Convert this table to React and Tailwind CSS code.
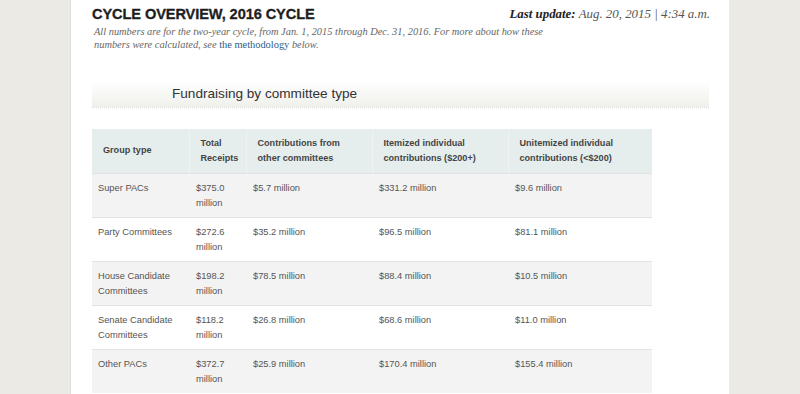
import React from 'react';

const rows = [
    { type: 'Super PACs', total: '$375.0 million', other: '$5.7 million', itemized: '$331.2 million', unitemized: '$9.6 million' },
    { type: 'Party Committees', total: '$272.6 million', other: '$35.2 million', itemized: '$96.5 million', unitemized: '$81.1 million' },
    { type: 'House Candidate Committees', total: '$198.2 million', other: '$78.5 million', itemized: '$88.4 million', unitemized: '$10.5 million' },
    { type: 'Senate Candidate Committees', total: '$118.2 million', other: '$26.8 million', itemized: '$68.6 million', unitemized: '$11.0 million' },
    { type: 'Other PACs', total: '$372.7 million', other: '$25.9 million', itemized: '$170.4 million', unitemized: '$155.4 million' },
];

const headers = [
    'Group type',
    'Total Receipts',
    'Contributions from other committees',
    'Itemized individual contributions ($200+)',
    'Unitemized individual contributions (<$200)',
];

const widths = ['w-[97px]', 'w-[57px]', 'w-[126px]', 'w-[136px]', 'w-[144px]'];

const App = () => {
    return (
        <div className="min-h-[394px] w-full bg-[#ebeae4] font-['Liberation_Sans',Arial,sans-serif]">
            <div className="ml-[70px] w-[659px] min-h-[394px] bg-white border-l border-[#e0dfd8] pl-[21px] pr-[20px] pt-[5px]">

                {/* title row */}
                <div className="flex justify-between items-start">
                    <h1 className="text-[14.6px] leading-[18px] font-bold text-[#1e1e1e] tracking-[-0.1px] [-webkit-text-stroke:0.3px_#1e1e1e]">
                        CYCLE OVERVIEW, 2016 CYCLE
                    </h1>
                    <p className="font-['Liberation_Serif',serif] italic text-[12.9px] leading-[18px] text-[#555] -mr-[1px]">
                        <b className="text-[#222]">Last update:</b> Aug. 20, 2015 | 4:34 a.m.
                    </p>
                </div>
                <p className="mt-[2px] ml-[2px] w-[470px] font-['Liberation_Serif',serif] italic text-[10.4px] leading-[13px] text-[#666]">
                    All numbers are for the two-year cycle, from Jan. 1, 2015 through Dec. 31, 2016. For more about how these numbers were calculated, see{' '}
                    <a className="not-italic text-[#2b5b87]">the methodology</a> below.
                </p>

                {/* section band */}
                <div className="mt-[29px] h-[28px] bg-gradient-to-b from-white to-[#f0f0eb] border-b border-dotted border-[#d8d8d8] pl-[80px] flex items-center">
                    <h2 className="text-[13.6px] text-[#333] pt-[1px]">Fundraising by committee type</h2>
                </div>

                {/* table */}
                <table className="mt-[21px] table-fixed border-collapse w-[560px]">
                    <colgroup>
                        {widths.map((w, i) => <col key={i} className={w} />)}
                    </colgroup>
                    <thead>
                        <tr className="bg-[#e5eeed] h-[44px]">
                            {headers.map((h, i) => (
                                <th
                                    key={i}
                                    className={`text-left align-middle font-bold text-[9.1px] leading-[15px] text-[#444] border-r border-[#edf3f2] last:border-r-0 ${i === 0 ? 'pl-[11px]' : 'pl-[11px] pr-[22px]'}`}
                                >
                                    {h}
                                </th>
                            ))}
                        </tr>
                    </thead>
                    <tbody>
                        {rows.map((r, i) => (
                            <tr key={i} className={`h-[44px] border-t border-[#e2e2e2] ${i % 2 === 0 ? 'bg-[#f3f3f3]' : 'bg-white'}`}>
                                {[r.type, r.total, r.other, r.itemized, r.unitemized].map((v, j) => (
                                    <td
                                        key={j}
                                        className={`align-top pt-[7px] pb-[6px] text-[9.3px] leading-[15px] text-[#555] ${j === 0 ? 'pl-[6px] pr-[8px]' : 'pl-[7px] pr-[6px]'}`}
                                    >
                                        {v}
                                    </td>
                                ))}
                            </tr>
                        ))}
                    </tbody>
                </table>
            </div>
        </div>
    );
};

export default App;
